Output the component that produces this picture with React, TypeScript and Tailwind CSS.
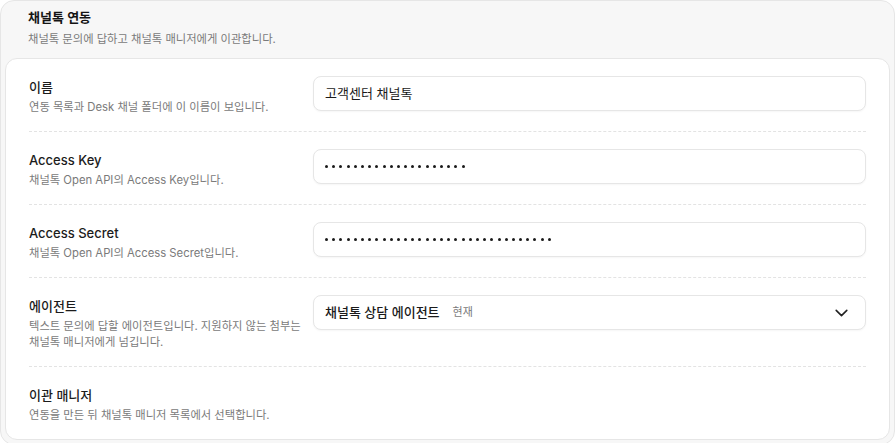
import React from "react";

const font = { fontFamily: '"Inter", "Noto Sans CJK KR", sans-serif' };

function Row({
  label,
  desc,
  children,
  last,
}: {
  label: string;
  desc: React.ReactNode;
  children?: React.ReactNode;
  last?: boolean;
}) {
  return (
    <div
      className={
        "grid grid-cols-[274px_1fr] gap-x-[10px] pt-[17px] pb-[16px] " +
        (last ? "" : "border-b border-dashed border-[#e3e3e3]")
      }
    >
      <div className="pt-[1px]">
        <div className="text-[13px] leading-[20px] font-medium text-[#1c1c1c]">{label}</div>
        <div className="mt-[2px] text-[11.3px] leading-[16px] text-[#7a7a7a]">{desc}</div>
      </div>
      <div>{children}</div>
    </div>
  );
}

function TextBox({ children }: { children: React.ReactNode }) {
  return (
    <div className="h-[35px] flex items-center rounded-[8px] border border-[#e6e6e6] bg-white pl-[11px] pr-[11px] shadow-[0_1px_2px_rgba(0,0,0,0.04)] text-[13px] text-[#1a1a1a]">
      {children}
    </div>
  );
}

function Dots({ n }: { n: number }) {
  return (
    <span className="flex items-center gap-[4.2px]">
      {Array.from({ length: n }).map((_, i) => (
        <span key={i} className="block w-[3px] h-[3px] rounded-full bg-[#1a1a1a]" />
      ))}
    </span>
  );
}

export default function App() {
  return (
    <div style={font} className="w-[896px]">
      <div className="rounded-[14px] border border-[#e6e6e6] bg-[#f7f7f7] p-1 mr-[1px]">
        <div className="pl-[23px] pt-[2px] pb-[11px]">
          <div className="text-[13px] leading-[20px] font-semibold text-[#141414]">채널톡 연동</div>
          <div className="mt-[4px] text-[11.3px] leading-[16px] text-[#7a7a7a]">
            채널톡 문의에 답하고 채널톡 매니저에게 이관합니다.
          </div>
        </div>
        <div className="rounded-[12px] border border-[#e6e6e6] bg-white px-[23px]">
          <Row label="이름" desc="연동 목록과 Desk 채널 폴더에 이 이름이 보입니다.">
            <TextBox>고객센터 채널톡</TextBox>
          </Row>
          <Row label="Access Key" desc="채널톡 Open API의 Access Key입니다.">
            <TextBox>
              <Dots n={20} />
            </TextBox>
          </Row>
          <Row label="Access Secret" desc="채널톡 Open API의 Access Secret입니다.">
            <TextBox>
              <Dots n={32} />
            </TextBox>
          </Row>
          <Row
            label="에이전트"
            desc="텍스트 문의에 답할 에이전트입니다. 지원하지 않는 첨부는 채널톡 매니저에게 넘깁니다."
          >
            <TextBox>
              <div className="flex flex-1 items-center justify-between">
                <div className="flex items-center gap-[13px]">
                  <span className="font-medium text-[#1a1a1a]">채널톡 상담 에이전트</span>
                  <span className="text-[11px] text-[#7a7a7a]">현재</span>
                </div>
                <svg width="13" height="8" viewBox="0 0 13 8" className="mr-[6px]">
                  <path d="M1.2 1.4l5.3 5.2 5.3-5.2" fill="none" stroke="#222" strokeWidth="1.6" strokeLinecap="round" strokeLinejoin="round" />
                </svg>
              </div>
            </TextBox>
          </Row>
          <Row last label="이관 매니저" desc="연동을 만든 뒤 채널톡 매니저 목록에서 선택합니다." />
        </div>
      </div>
    </div>
  );
}
